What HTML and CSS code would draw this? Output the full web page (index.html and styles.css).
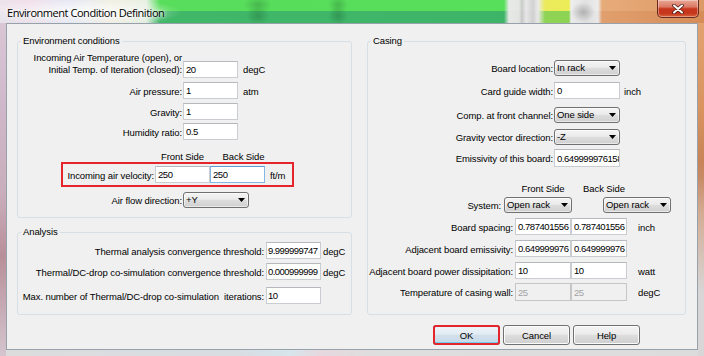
FILE: index.html
```html
<!DOCTYPE html>
<html>
<head>
<meta charset="utf-8">
<title>Environment Condition Definition</title>
<link rel="stylesheet" href="styles.css">
</head>
<body>
<div class="window">
  <div class="titlebar">
    <span class="title">Environment Condition Definition</span>
    <span class="close"><svg width="12" height="10" viewBox="0 0 12 10"><path d="M2 1.5 L10 8.5 M10 1.5 L2 8.5" stroke="#4a1a12" stroke-width="3.6" stroke-linecap="round"/><path d="M2 1.5 L10 8.5 M10 1.5 L2 8.5" stroke="#ffffff" stroke-width="2" stroke-linecap="round"/></svg></span>
  </div>
  <div class="client">
    <div class="panes">
      <div class="col-left">
        <fieldset class="group g-env">
          <legend>Environment conditions</legend>
          <div class="row row-temp">
            <span class="lbl l-env">Incoming Air Temperature (open), or<br>Initial Temp. of Iteration (closed):</span>
            <input class="tb w-env" value="20">
            <span class="unit">degC</span>
          </div>
          <div class="row mt4">
            <span class="lbl l-env">Air pressure:</span>
            <input class="tb w-env" value="1">
            <span class="unit">atm</span>
          </div>
          <div class="row mt4">
            <span class="lbl l-env">Gravity:</span>
            <input class="tb w-env" value="1">
          </div>
          <div class="row mt3">
            <span class="lbl l-env">Humidity ratio:</span>
            <input class="tb w-env" value="0.5">
          </div>
          <div class="heads h-env"><span>Front Side</span><span>Back Side</span></div>
          <div class="row vel">
            <span class="lbl l-vel">Incoming air velocity:</span>
            <input class="tb w-vel" value="250">
            <input class="tb w-vel next focus" value="250">
            <span class="unit">ft/m</span>
          </div>
          <div class="row mt5">
            <span class="lbl l-env">Air flow direction:</span>
            <div class="combo w-flow"><span>+Y</span><svg width="7" height="4" viewBox="0 0 7 4"><polygon points="0,0 7,0 3.5,4" fill="#000"/></svg></div>
          </div>
        </fieldset>
        <fieldset class="group g-ana">
          <legend>Analysis</legend>
          <div class="row mt4">
            <span class="lbl l-ana">Thermal analysis convergence threshold:</span>
            <input class="tb w-ana" value="9.999999747">
            <span class="unit u-ana">degC</span>
          </div>
          <div class="row mt4">
            <span class="lbl l-ana">Thermal/DC-drop co-simulation convergence threshold:</span>
            <input class="tb w-ana" value="0.000999999">
            <span class="unit u-ana">degC</span>
          </div>
          <div class="row mt7">
            <span class="lbl l-ana">Max. number of Thermal/DC-drop co-simulation&nbsp; iterations:</span>
            <input class="tb w-ana" value="10">
          </div>
        </fieldset>
      </div>
      <fieldset class="group g-cas">
        <legend>Casing</legend>
        <div class="row mt13">
          <span class="lbl l-cas">Board location:</span>
          <div class="combo w-cas"><span>In rack</span><svg width="7" height="4" viewBox="0 0 7 4"><polygon points="0,0 7,0 3.5,4" fill="#000"/></svg></div>
        </div>
        <div class="row mt6">
          <span class="lbl l-cas">Card guide width:</span>
          <input class="tb w-cas" value="0">
          <span class="unit u-cas">inch</span>
        </div>
        <div class="row mt8">
          <span class="lbl l-cas">Comp. at front channel:</span>
          <div class="combo w-cas"><span>One side</span><svg width="7" height="4" viewBox="0 0 7 4"><polygon points="0,0 7,0 3.5,4" fill="#000"/></svg></div>
        </div>
        <div class="row mt6">
          <span class="lbl l-cas">Gravity vector direction:</span>
          <div class="combo w-cas"><span>-Z</span><svg width="7" height="4" viewBox="0 0 7 4"><polygon points="0,0 7,0 3.5,4" fill="#000"/></svg></div>
        </div>
        <div class="row mt4">
          <span class="lbl l-cas">Emissivity of this board:</span>
          <input class="tb w-cas tall" value="0.649999976158142">
        </div>
        <div class="heads h-cas"><span>Front Side</span><span>Back Side</span></div>
        <div class="row mt2">
          <span class="lbl l-sys">System:</span>
          <div class="combo w-sys"><span>Open rack</span><svg width="7" height="4" viewBox="0 0 7 4"><polygon points="0,0 7,0 3.5,4" fill="#000"/></svg></div>
          <div class="combo w-sys sys-back"><span>Open rack</span><svg width="7" height="4" viewBox="0 0 7 4"><polygon points="0,0 7,0 3.5,4" fill="#000"/></svg></div>
        </div>
        <div class="row mt5">
          <span class="lbl l-low">Board spacing:</span>
          <input class="tb w-low" value="0.787401556">
          <input class="tb w-low next-low" value="0.787401556">
          <span class="unit u-low">inch</span>
        </div>
        <div class="row mt5">
          <span class="lbl l-low">Adjacent board emissivity:</span>
          <input class="tb w-low" value="0.649999976">
          <input class="tb w-low next-low" value="0.649999976">
        </div>
        <div class="row mt5">
          <span class="lbl l-low">Adjacent board power dissipitation:</span>
          <input class="tb w-low" value="10">
          <input class="tb w-low next-low" value="10">
          <span class="unit u-low">watt</span>
        </div>
        <div class="row mt4">
          <span class="lbl l-low">Temperature of casing wall:</span>
          <input class="tb w-low tall" value="25" disabled>
          <input class="tb w-low next-low tall" value="25" disabled>
          <span class="unit u-low">degC</span>
        </div>
      </fieldset>
    </div>
    <div class="buttons">
      <button class="btn btn-default">OK</button>
      <button class="btn">Cancel</button>
      <button class="btn">Help</button>
    </div>
  </div>
</div>
</body>
</html>
```
FILE: styles.css
```css
* { box-sizing: border-box; }

html, body { margin: 0; padding: 0; }

body {
  width: 704px;
  height: 356px;
  overflow: hidden;
  font-family: "Liberation Sans", Arial, sans-serif;
  font-size: 9.5px;
  line-height: 12px;
  letter-spacing: -0.1px;
  color: #000;
}

.window {
  width: 704px;
  height: 356px;
  display: flex;
  flex-direction: column;
  background:
    linear-gradient(to bottom, rgba(220,220,220,0) 45%, rgba(216,216,218,0.97) 82%) right top / 6px 100% no-repeat,
    linear-gradient(to bottom, #e4a674 0, #d99460 30%, #c47f55 50%, #cf9066 60%) right top / 6px 100% no-repeat,
    linear-gradient(to bottom, #dccbd8 0, #cfb8ca 30%, #c9adbb 55%, #b88f99 72%, #d4c5ce 100%) left top / 6px 100% no-repeat,
    linear-gradient(to right, #dcdcdc 0, #d8dde2 240px, #d6e6ec 290px, #e6d8de 320px, #dedede 380px, #dcdcdc 100%);
}

/* ---------- title bar ---------- */
.titlebar {
  flex-shrink: 0;
  height: 23px;
  display: flex;
  align-items: flex-start;
  background:
    radial-gradient(ellipse 14px 9px at 258px 5px, rgba(40,110,50,0.35), rgba(40,110,50,0)),
    radial-gradient(ellipse 10px 9px at 338px 5px, rgba(40,110,50,0.35), rgba(40,110,50,0)),
    radial-gradient(ellipse 12px 9px at 258px 16px, rgba(20,80,40,0.3), rgba(20,80,40,0)),
    radial-gradient(ellipse 10px 9px at 338px 16px, rgba(20,80,40,0.3), rgba(20,80,40,0)),
    radial-gradient(ellipse 12px 10px at 583px 12px, rgba(90,90,90,0.35), rgba(90,90,90,0)),
    radial-gradient(ellipse 100px 15px at 82px 12px, rgba(255,255,255,0.9), rgba(255,255,255,0)),
    linear-gradient(to right, #ece4ea 0, #f0dde7 30px, #dfe3f2 70px, #eeedde 110px, #e8f0e4 146px, #58dd5c 160px, #57de5a 504px, #e8eae8 509px, #e4e6e4 519px, #c9cbc9 522px, #e8e8e8 526px, #d2d2d2 533px, #eaeaea 538px, #eaea5c 545px, #ecec58 569px, #eeeeee 571px, #e2e2e2 586px, #ececec 598px, #e7ab7a 602px, #dd9965 704px) left top / 100% 11px no-repeat,
    linear-gradient(to right, #e6e2ea 0, #e8dce6 30px, #dce0ee 70px, #ebe8dc 110px, #e2ede0 146px, #41b868 160px, #3db468 504px, #e6e8e6 509px, #e2e4e2 519px, #c6c8c6 522px, #e6e6e6 526px, #d0d0d0 533px, #e8e8e8 538px, #8fd455 545px, #8cd253 569px, #ebebeb 571px, #dedede 586px, #e8e8e8 598px, #e19f6e 602px, #d58c58 704px) left 11px / 100% 12px no-repeat;
}

.title {
  margin: 5px 0 0 7px;
  font-family: "Open Sans", "Noto Sans", sans-serif;
  font-size: 11px;
  line-height: 15px;
  letter-spacing: -0.45px;
  color: #000;
  text-shadow: 0 0 6px #fff, 0 0 3px #fff;
}

.close {
  margin-left: auto;
  margin-right: 5px;
  width: 42px;
  height: 18px;
  display: flex;
  align-items: center;
  justify-content: center;
  border: 1px solid #6b2a1c;
  border-top: none;
  border-radius: 0 0 5px 5px;
  background: linear-gradient(#e9a797 0, #dc7a66 40%, #c7371e 52%, #c5361c 78%, #d9653f 100%);
  box-shadow: inset 0 0 0 1px rgba(255,255,255,0.35);
}

/* ---------- client ---------- */
.client {
  flex: 1;
  margin: 0 6px 6px 6px;
  border: 1px solid #97a1ab;
  background: #f0f0f0;
  padding: 11px 0 0 10px;
  display: flex;
  flex-direction: column;
}

.panes {
  display: flex;
  gap: 15px;
  align-items: stretch;
}

.col-left {
  width: 335px;
  display: flex;
  flex-direction: column;
}

.group {
  margin: 0;
  padding: 0;
  min-width: 0;
  border: 1px solid #d5dfe5;
  border-radius: 3px;
}

.group legend {
  margin-left: 3px;
  padding: 0 2px;
  line-height: 12px;
}

.g-env { padding-bottom: 9px; }
.g-ana { margin-top: 8px; padding-bottom: 10px; }
.g-cas { width: 319px; }

/* ---------- rows ---------- */
.row {
  display: flex;
  align-items: center;
}

.mt2 { margin-top: 2px; }
.mt3 { margin-top: 3px; }
.mt4 { margin-top: 4px; }
.mt5 { margin-top: 5px; }
.mt6 { margin-top: 6px; }
.mt7 { margin-top: 7px; }
.mt8 { margin-top: 8px; }
.mt13 { margin-top: 13px; }

.lbl {
  flex-shrink: 0;
  text-align: right;
  white-space: nowrap;
  padding-top: 2px;
  line-height: 12px;
}

.unit {
  padding-top: 2px;
  margin-left: 5px;
  white-space: nowrap;
}

.row-temp {
  margin-top: 5px;
  align-items: flex-end;
}
.row-temp .lbl { padding-top: 0; margin-bottom: 2px; }
.row-temp .unit { align-self: center; padding-top: 10px; }

.l-env { width: 164px; margin-right: 1px; }
.w-env { width: 55px; }

.heads {
  display: flex;
  line-height: 12px;
}
.heads span { text-align: center; }

.h-env { margin-top: 11px; margin-left: 137px; gap: 6px; }
.h-env span { width: 55px; }

.vel {
  margin-top: -1px;
  margin-left: 43px;
  width: 233px;
  border: 2px solid #e4252c;
  padding: 2px 0 2px 2px;
}
.l-vel { width: 89px; margin-right: 1px; }
.w-vel { width: 55px; height: 16px; }
.next { margin-left: 6px; }

.w-flow { width: 66px; }

.l-ana { width: 246px; margin-right: 2px; }
.tb.w-ana { width: 55px; padding-left: 1px; letter-spacing: -0.55px; }
.u-ana { margin-left: 2px; }

.l-cas { width: 185px; margin-right: 1px; }
.w-cas { width: 66px; }
.u-cas { margin-left: 4px; }

.h-cas { margin-top: 16px; margin-left: 147px; gap: 5px; }
.h-cas span { width: 56px; }

.l-sys { width: 133px; margin-right: 3px; }
.w-sys { width: 68px; }
.sys-back { margin-left: 31px; }

.l-low { width: 145px; margin-right: 2px; }
.w-low { width: 56px; }
.next-low { margin-left: 5px; }
.u-low { margin-left: 11px; }

/* ---------- controls ---------- */
.tb {
  display: block;
  flex-shrink: 0;
  height: 17px;
  margin: 0;
  padding: 0 0 0 2px;
  border: 1px solid #c9ccd1;
  border-top-color: #b5b8bd;
  background: #fff;
  font-family: "Liberation Sans", Arial, sans-serif;
  font-size: 9.5px;
  letter-spacing: -0.45px;
  color: #000;
  outline: none;
}
.tb.tall { height: 18px; }
.tb.focus { border-color: #86b7e4; border-top-color: #5d9bd6; }
.tb:disabled {
  background: #f0f0f0;
  border-color: #c4c6c8;
  color: #a3a3a3;
  -webkit-text-fill-color: #a3a3a3;
}

.combo {
  flex-shrink: 0;
  height: 16px;
  display: flex;
  align-items: center;
  justify-content: space-between;
  padding: 0 3px 0 2px;
  border: 1px solid #707070;
  border-radius: 3px;
  background: linear-gradient(#f4f4f4 0, #ebebeb 45%, #dddddd 52%, #cfcfcf 100%);
  box-shadow: inset 0 0 0 1px rgba(255,255,255,0.55);
  white-space: nowrap;
}
.combo svg { flex-shrink: 0; }

/* ---------- buttons ---------- */
.buttons {
  margin-top: 10px;
  padding-right: 57px;
  display: flex;
  justify-content: flex-end;
  gap: 3px;
}

.btn {
  width: 67px;
  height: 20px;
  margin: 0;
  padding: 0;
  border: 1px solid #707070;
  border-radius: 3px;
  background: linear-gradient(#f4f4f4 0, #ebebeb 45%, #dddddd 52%, #cfcfcf 100%);
  box-shadow: inset 0 0 0 1px #fbfbfb;
  font-family: "Liberation Sans", Arial, sans-serif;
  font-size: 9.5px;
  letter-spacing: -0.1px;
  color: #000;
}

.btn-default {
  border-color: #3c7fb1;
  background: linear-gradient(#eef4f9 0, #e2ecf4 45%, #d2e0eb 52%, #c5d8e7 100%);
  box-shadow: inset 0 -2px 0 #6fd0f0, inset 0 0 0 1px #e8f6fc;
  outline: 2px solid #e4252c;
  outline-offset: -2px;
}
```
